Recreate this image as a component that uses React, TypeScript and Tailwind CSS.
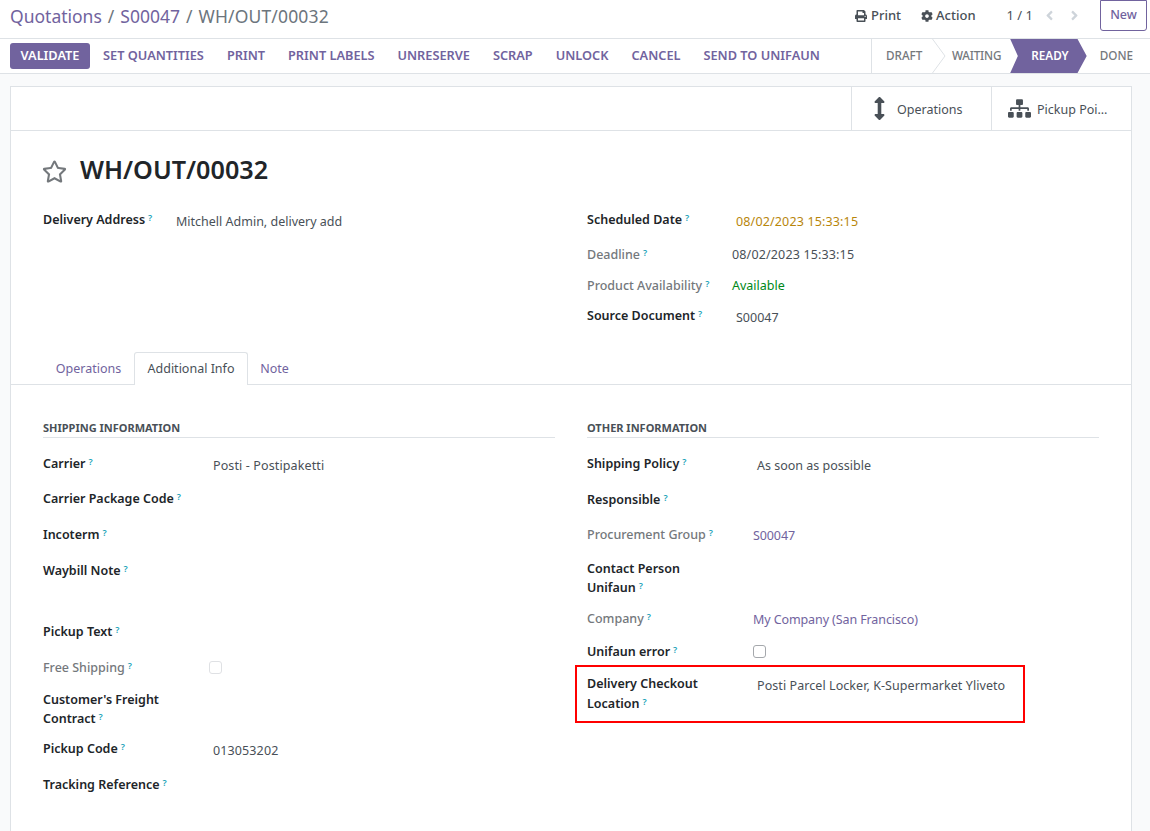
import React from 'react';
import { FaArrowsAltV, FaCog, FaPrint, FaSitemap, FaRegStar, FaAngleLeft, FaAngleRight } from 'react-icons/fa';

type Row = {
  label: React.ReactNode;
  value?: string;
  height: string;
  muted?: boolean;
  link?: boolean;
  check?: boolean;
  dim?: boolean;
};

const leftRows: Row[] = [
  { label: 'Carrier', value: 'Posti - Postipaketti', height: 'h-[35px]' },
  { label: 'Carrier Package Code', height: 'h-[36px]' },
  { label: 'Incoterm', height: 'h-[36px]' },
  { label: 'Waybill Note', height: 'h-[61px]' },
  { label: 'Pickup Text', height: 'h-[36px]' },
  { label: 'Free Shipping', muted: true, check: true, dim: true, height: 'h-[32px]' },
  { label: <>Customer's Freight<br />Contract</>, height: 'h-[49px]' },
  { label: 'Pickup Code', value: '013053202', height: 'h-[36px]' },
  { label: 'Tracking Reference', height: 'h-[36px]' },
];

const rightRows: Row[] = [
  { label: 'Shipping Policy', value: 'As soon as possible', height: 'h-[36px]' },
  { label: 'Responsible', height: 'h-[35px]' },
  { label: 'Procurement Group', value: 'S00047', muted: true, link: true, height: 'h-[34px]' },
  { label: <>Contact Person<br />Unifaun</>, height: 'h-[50px]' },
  { label: 'Company', value: 'My Company (San Francisco)', muted: true, link: true, height: 'h-[33px]' },
  { label: 'Unifaun error', check: true, height: 'h-[23px]' },
];

const actions = ['SET QUANTITIES', 'PRINT', 'PRINT LABELS', 'UNRESERVE', 'SCRAP', 'UNLOCK', 'CANCEL', 'SEND TO UNIFAUN'];

const Help = () => (
  <sup className="ml-[3px] text-[9px] font-semibold text-[#17a2b8] leading-none relative -top-[3px]">?</sup>
);

const Field = ({ row, labelWidth, valueInset }: { row: Row; labelWidth: string; valueInset: string }) => (
  <div className={`flex ${row.height}`}>
    <div className={`${labelWidth} shrink-0 leading-[19px] ${row.muted ? 'font-medium text-[#74787c]' : 'font-semibold text-[#212529]'}`}>
      {row.label}
      <Help />
    </div>
    {row.check ? (
      <div className={`mt-[3px] h-[13px] w-[13px] rounded-[3px] border ${row.dim ? 'ml-0 border-[#dfe1e4]' : 'border-[#a5a8ac]'}`} />
    ) : row.value ? (
      <div className={`leading-[19px] ${row.link ? 'mt-[1px] tracking-[-0.1px] text-[#71639e]' : `mt-[2px] ${valueInset} text-[#495057]`}`}>{row.value}</div>
    ) : null}
  </div>
);

export default function App() {
  return (
    <div className="h-[831px] w-[1150px] overflow-hidden bg-[#f9fafb] font-['Noto_Sans',sans-serif] text-[12.5px] text-[#495057]">
      {/* Breadcrumb */}
      <div className="flex h-[39px] items-start border-b border-[#dee2e6] bg-white pl-[10px] pr-[3px]">
        <div className="flex-1 pt-[4px] text-[17.5px] leading-[24px] text-[#6c757d]">
          <span className="text-[#71639e]">Quotations</span>
          <span className="mx-[6px]">/</span>
          <span className="text-[#71639e]">S00047</span>
          <span className="mx-[6px]">/</span>
          <span className="tracking-[0.15px]">WH/OUT/00032</span>
        </div>
        <div className="flex h-[31px] items-center text-[13px] font-medium text-[#495057]">
          <FaPrint className="mr-[4px] text-[12px]" />
          <span>Print</span>
          <FaCog className="ml-[20px] mr-[3px] text-[12px]" />
          <span>Action</span>
          <span className="ml-[31px] font-normal">1 / 1</span>
          <FaAngleLeft className="ml-[9px] text-[15px] text-[#ced4da]" />
          <FaAngleRight className="ml-[10px] text-[15px] text-[#ced4da]" />
          <div className="ml-[18px] flex h-[31px] w-[47px] items-center justify-center rounded-b-[3px] border border-[#71639e] text-[12.5px] text-[#71639e]">
            New
          </div>
        </div>
      </div>

      {/* Action bar */}
      <div className="flex h-[35px] items-center border-b border-[#dee2e6] bg-white pl-[10px]">
        <div className="flex h-[26px] w-[80px] items-center justify-center rounded-[3px] bg-[#71639e] text-[12.75px] font-semibold text-white">
          VALIDATE
        </div>
        <div className="ml-[13px] flex flex-1 gap-[23px] text-[12.75px] font-semibold text-[#71639e]">
          {actions.map((a) => (
            <span key={a}>{a}</span>
          ))}
        </div>
        <div className="mr-[17px] flex h-[34px] w-[262px] shrink-0 items-center border-l border-[#dee2e6] text-[11.7px] font-medium text-[#74787c]">
          <div className="relative flex h-full w-[61px] items-center pl-[14px]">
            DRAFT
            <svg className="absolute right-[-13px] top-0 h-[34px] w-[14px]" viewBox="0 0 14 34" fill="none">
              <path d="M0.5 0L13 17L0.5 34" stroke="#dee2e6" />
            </svg>
          </div>
          <div className="flex h-full w-[78px] items-center justify-end pr-[9px] tracking-[-0.2px]">WAITING</div>
          <div className="flex h-full w-[77px] items-center justify-center bg-[#71639e] pl-[3px] font-semibold text-white [clip-path:polygon(0_0,88%_0,100%_50%,88%_100%,0_100%,10%_50%)]">
            READY
          </div>
          <div className="flex-1 pl-[13px]">DONE</div>
        </div>
      </div>

      {/* Form sheet */}
      <div className="mx-[10px] mt-[12px] h-[760px] w-[1122px] border border-[#dee2e6] bg-white">
        <div className="flex h-[44px] justify-end border-b border-[#dee2e6]">
          <div className="flex w-[140px] items-center border-l border-[#dee2e6] pl-[16px] pt-[3px]">
            <FaArrowsAltV className="-mt-[3px] text-[23px] text-[#495057]" />
            <span className="ml-[6px] text-[#495057]">Operations</span>
          </div>
          <div className="flex w-[140px] items-center border-l border-[#dee2e6] pl-[16px] pt-[3px]">
            <FaSitemap className="-mt-[3px] text-[23px] text-[#495057]" />
            <span className="ml-[6px] text-[#495057]">Pickup Poi…</span>
          </div>
        </div>

        <div className="flex h-[221px] flex-col px-[32px] pt-[23px]">
          <div className="flex h-[34px] items-center">
            <FaRegStar className="-ml-[1px] text-[25px] text-[#74787c]" />
            <h1 className="-mt-[2px] ml-[13px] text-[25.2px] font-semibold text-[#212529]">WH/OUT/00032</h1>
          </div>
          <div className="mt-[22px] flex">
            <div className="flex w-[544px]">
              <div className="w-[133px] font-semibold leading-[19px] text-[#212529]">
                Delivery Address
                <Help />
              </div>
              <div className="mt-[2px] leading-[19px]">Mitchell Admin, delivery add</div>
            </div>
            <div className="flex flex-col">
              <div className="flex h-[35px]">
                <div className="w-[149px] font-semibold leading-[19px] text-[#212529]">
                  Scheduled Date
                  <Help />
                </div>
                <div className="mt-[2px] leading-[19px] tracking-[0.15px] text-[#b8860b]">08/02/2023 15:33:15</div>
              </div>
              <div className="flex h-[31px]">
                <div className="w-[145px] font-medium leading-[19px] text-[#74787c]">
                  Deadline
                  <Help />
                </div>
                <div className="leading-[19px] tracking-[0.15px]">08/02/2023 15:33:15</div>
              </div>
              <div className="flex h-[30px]">
                <div className="w-[145px] font-medium leading-[19px] text-[#74787c]">
                  Product Availability
                  <Help />
                </div>
                <div className="leading-[19px] text-[#008818]">Available</div>
              </div>
              <div className="flex">
                <div className="w-[149px] font-semibold leading-[19px] text-[#212529]">
                  Source Document
                  <Help />
                </div>
                <div className="mt-[2px] leading-[19px]">S00047</div>
              </div>
            </div>
          </div>
        </div>

        {/* Tabs */}
        <div className="flex h-[33px] items-end border-b border-[#dee2e6] pl-[32px]">
          <div className="-mb-px flex h-[33px] w-[91px] items-center justify-center pt-[2px] text-[#71639e]">Operations</div>
          <div className="-mb-px flex h-[33px] w-[114px] items-center justify-center rounded-t-[3px] border border-b-0 border-[#dee2e6] bg-white">
            Additional Info
          </div>
          <div className="-mb-px flex h-[33px] w-[53px] items-center justify-center pt-[2px] text-[#71639e]">Note</div>
        </div>

        {/* Additional info */}
        <div className="flex px-[32px] pt-[35px]">
          <div className="w-[512px]">
            <div className="border-b border-[#dee2e6] pb-[1px] text-[11px] font-bold leading-[16px] text-[#495057]">SHIPPING INFORMATION</div>
            <div className="mt-[16px] flex flex-col">
              {leftRows.map((r, i) => (
                <Field key={i} row={r} labelWidth="w-[166px]" valueInset="ml-[4px] tracking-[0.12px]" />
              ))}
            </div>
          </div>
          <div className="ml-[32px] w-[512px]">
            <div className="border-b border-[#dee2e6] pb-[1px] text-[11px] font-bold leading-[16px] text-[#495057]">OTHER INFORMATION</div>
            <div className="mt-[16px] flex flex-col">
              {rightRows.map((r, i) => (
                <Field key={i} row={r} labelWidth="w-[166px]" valueInset="ml-[4px]" />
              ))}
              <div className="-ml-[12px] flex h-[58px] w-[450px] border-2 border-[#ff0000] pl-[10px] pt-[7px]">
                <div className="w-[170px] shrink-0 font-semibold leading-[20px] text-[#212529]">
                  Delivery Checkout
                  <br />
                  Location
                  <Help />
                </div>
                <div className="mt-[2px] leading-[19px] tracking-[0.07px]">Posti Parcel Locker, K-Supermarket Yliveto</div>
              </div>
            </div>
          </div>
        </div>
      </div>
    </div>
  );
}
